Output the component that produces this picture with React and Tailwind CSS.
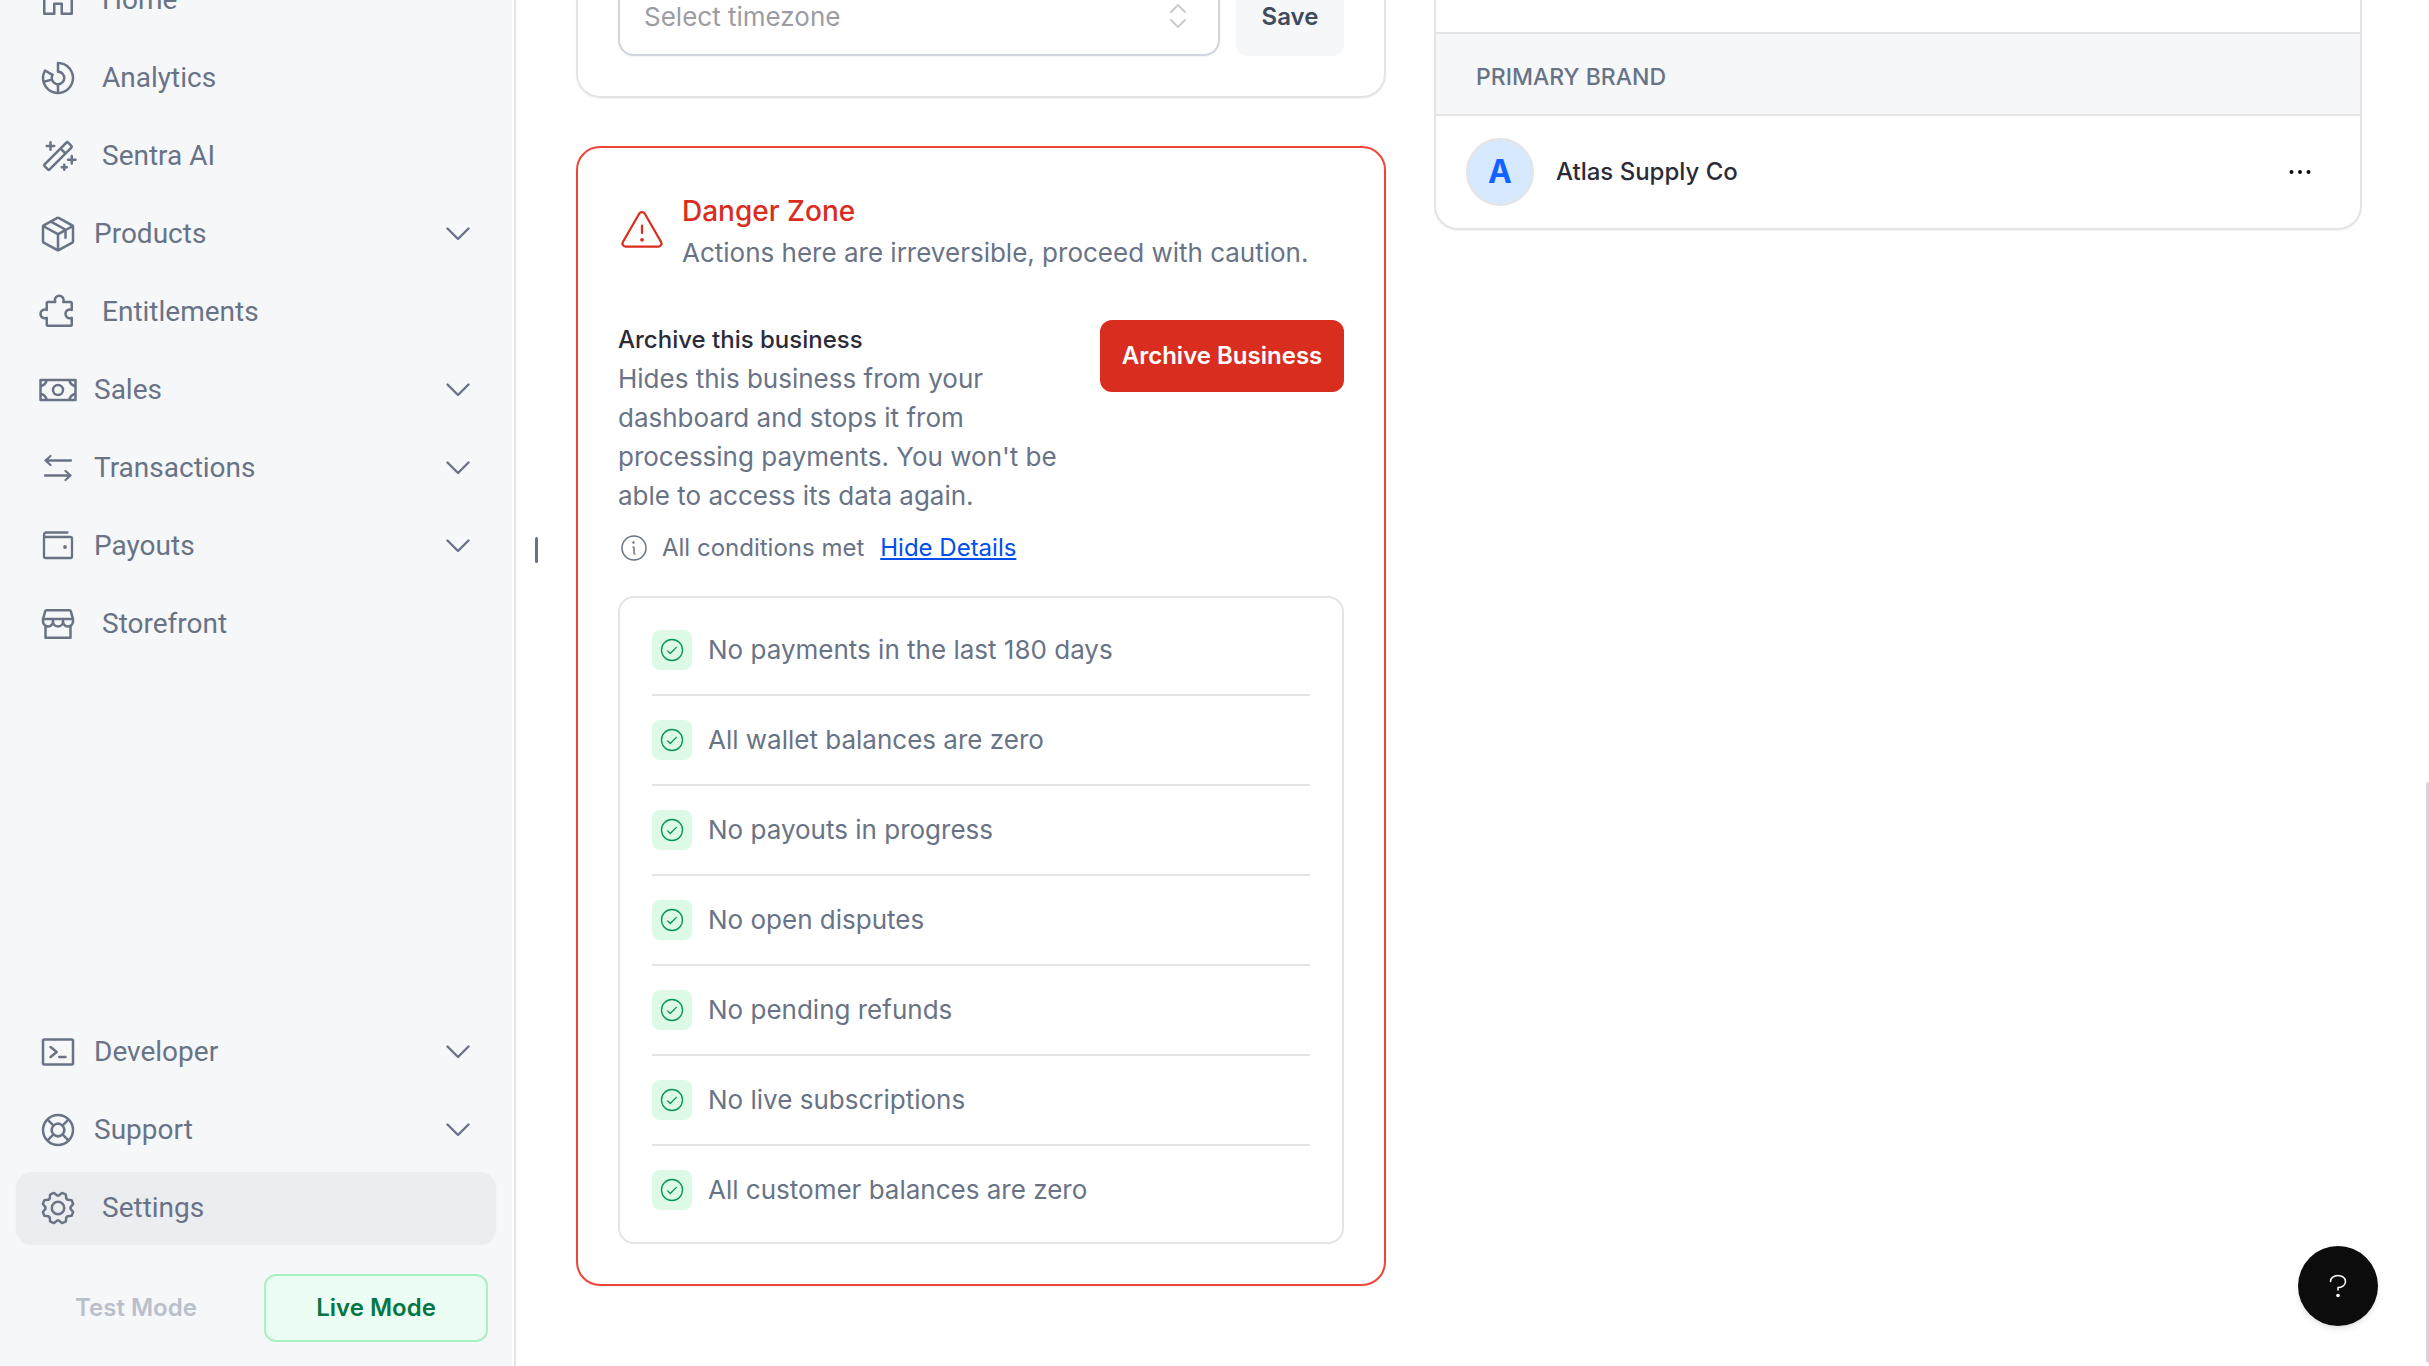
import { useState } from "react";
import {
  PiHouse,
  PiChartDonut,
  PiMagicWand,
  PiPackage,
  PiPuzzlePiece,
  PiMoney,
  PiStorefront,
  PiTerminalWindow,
  PiLifebuoy,
  PiGear,
  PiWarningLight,
  PiInfoLight,
  PiCheckCircleLight,
  PiDotsThreeBold,
} from "react-icons/pi";

const TransferIcon = ({ className }) => (
  <svg
    viewBox="0 0 40 40"
    fill="none"
    stroke="currentColor"
    strokeWidth="2.3"
    strokeLinecap="round"
    strokeLinejoin="round"
    className={className}
  >
    <path d="M33 12.500H7.500M12.500 8l-5 4.500 5 4.500" />
    <path d="M7 27.500h25.500M27.500 23l5 4.500-5 4.500" />
  </svg>
);

const WalletIcon = ({ className }) => (
  <svg
    viewBox="0 0 40 40"
    fill="none"
    stroke="currentColor"
    strokeWidth="2.3"
    strokeLinecap="round"
    strokeLinejoin="round"
    className={className}
  >
    <path d="M29.500 6.500H8.500a2.500 2.500 0 0 0-2.500 2.500v21.500a1.500 1.500 0 0 0 1.500 1.500h25a1.500 1.500 0 0 0 1.500-1.500v-18a1.500 1.500 0 0 0-1.500-1.500H8.500a2.500 2.500 0 0 1-2.500-2.200" />
    <circle cx="27" cy="21" r="1.900" fill="currentColor" stroke="none" />
  </svg>
);

const ChevronIcon = ({ className }) => (
  <svg
    viewBox="0 0 24 14"
    fill="none"
    stroke="currentColor"
    strokeWidth="2.4"
    strokeLinecap="round"
    strokeLinejoin="round"
    className={className}
  >
    <path d="M1.500 1.500L12 12 22.500 1.500" />
  </svg>
);

const SortIcon = ({ className }) => (
  <svg
    viewBox="0 0 16 24"
    fill="none"
    stroke="currentColor"
    strokeWidth="2"
    strokeLinecap="round"
    strokeLinejoin="round"
    className={className}
  >
    <path d="M1 8l7-7 7 7M1 16l7 7 7-7" />
  </svg>
);

const QuestionIcon = ({ className }) => (
  <svg viewBox="0 0 18 24" fill="none" className={className}>
    <path
      d="M1.500 7.500C1.500 4 4.800 1.500 9 1.500S16.500 4 16.500 7.500 13 13.500 9 13.500V16"
      stroke="currentColor"
      strokeWidth="1.500"
      strokeLinecap="round"
      strokeLinejoin="round"
    />
    <circle cx="9" cy="21.500" r="1.800" fill="currentColor" />
  </svg>
);

const mainLinks = [
  { name: "Home", icon: PiHouse },
  { name: "Analytics", icon: PiChartDonut },
  { name: "Sentra AI", icon: PiMagicWand },
  { name: "Products", icon: PiPackage, group: true },
  { name: "Entitlements", icon: PiPuzzlePiece },
  { name: "Sales", icon: PiMoney, group: true },
  { name: "Transactions", icon: TransferIcon, group: true },
  { name: "Payouts", icon: WalletIcon, group: true },
  { name: "Storefront", icon: PiStorefront },
];

const footerLinks = [
  { name: "Developer", icon: PiTerminalWindow, group: true },
  { name: "Support", icon: PiLifebuoy, group: true },
  { name: "Settings", icon: PiGear, active: true },
];

const conditions = [
  "No payments in the last 180 days",
  "All wallet balances are zero",
  "No payouts in progress",
  "No open disputes",
  "No pending refunds",
  "No live subscriptions",
  "All customer balances are zero",
];

const NavItem = ({ item }) => {
  const Icon = item.icon;

  if (item.group) {
    return (
      <button className="flex h-[72px] w-full items-center gap-4 rounded-2xl pr-[26px] pl-[22px] text-left">
        <Icon className="size-10 shrink-0" />
        <span className="flex-1">{item.name}</span>
        <ChevronIcon className="h-3.5 w-6 shrink-0" />
      </button>
    );
  }

  return (
    <a
      href="#"
      className={`flex h-[72px] items-center gap-6 rounded-2xl px-[22px] ${
        item.active ? "bg-[#ecedf1] shadow-xs" : ""
      }`}
    >
      <Icon className="size-10 shrink-0" />
      {item.name}
    </a>
  );
};

const Sidebar = () => {
  const [live, setLive] = useState(true);

  const modeStyle = (on) => {
    if (on) return "border-[#abefc6] bg-[#ecfdf3] text-[#067647]";
    return "border-transparent text-[#b9c0cc]";
  };

  return (
    <aside className="flex w-[516px] shrink-0 flex-col border-r-2 border-[#e4e4e6] bg-[#f6f7f9] pb-6 shadow-[inset_-2px_0_0_#fff]">
      <nav className="-mt-9 flex flex-1 flex-col gap-1.5 pr-[18px] pl-4 font-[Roboto,sans-serif] text-[28px] text-[#697386]">
        {mainLinks.map((item) => (
          <NavItem key={item.name} item={item} />
        ))}
        <div className="mt-auto flex flex-col gap-1.5">
          {footerLinks.map((item) => (
            <NavItem key={item.name} item={item} />
          ))}
        </div>
      </nav>

      {/* MODE SWITCH */}
      <div className="mt-[30px] flex gap-4 pr-[26px] pl-6 text-2xl font-semibold">
        <button
          onClick={() => setLive(false)}
          className={`h-[68px] flex-1 rounded-xl border-2 ${modeStyle(!live)}`}
        >
          Test Mode
        </button>
        <button
          onClick={() => setLive(true)}
          className={`h-[68px] flex-1 rounded-xl border-2 ${modeStyle(live)}`}
        >
          Live Mode
        </button>
      </div>
    </aside>
  );
};

const TimezoneCard = () => (
  <section className="flex gap-4 rounded-3xl border-2 border-[#e4e4e6] p-10 shadow-xs">
    <div className="relative flex-1">
      <select
        aria-label="Timezone"
        defaultValue=""
        className="h-20 w-full appearance-none rounded-2xl border-2 border-[#d0d5dd] bg-white px-6 text-[26px] text-[#9c9ca3] shadow-xs"
      >
        <option value="">Select timezone</option>
        <option value="utc">UTC</option>
      </select>
      <SortIcon className="pointer-events-none absolute top-7 right-[34px] h-6 w-4 text-[#cccccf]" />
    </div>
    <button className="h-20 w-[108px] rounded-xl bg-[#f6f7f9] pt-0.5 text-2xl font-semibold text-[#414b5e]">
      Save
    </button>
  </section>
);

const DangerZone = () => {
  const [open, setOpen] = useState(true);

  return (
    <section className="rounded-3xl border-2 border-[#f04438] p-10 shadow-xs">
      <div className="flex items-center gap-4">
        <PiWarningLight className="size-12 shrink-0 text-[#d92d20]" />
        <div>
          <h2 className="text-[28px] leading-[46px] font-medium text-[#d92d20]">Danger Zone</h2>
          <p className="text-[26px] leading-[38px] text-[#697386]">
            Actions here are irreversible, proceed with caution.
          </p>
        </div>
      </div>

      <div className="mt-12 flex items-start gap-8">
        <div className="flex-1">
          <h3 className="text-2xl leading-[39px] font-medium text-[#2b2b38]">
            Archive this business
          </h3>
          <p className="text-[26px] leading-[39px] text-[#697386]">
            Hides this business from your dashboard and stops it from processing payments. You
            won't be able to access its data again.
          </p>
        </div>
        <button className="h-[72px] w-[244px] shrink-0 rounded-xl bg-[#d92d20] text-2xl font-semibold text-white">
          Archive Business
        </button>
      </div>

      <div className="mt-[13px] flex items-center gap-3 text-2xl leading-10 text-[#697386]">
        <PiInfoLight className="size-8 shrink-0" />
        All conditions met
        <button
          onClick={() => setOpen(!open)}
          className="ml-1 text-[#004eeb] underline decoration-2 underline-offset-2"
        >
          {open ? "Hide Details" : "Show Details"}
        </button>
      </div>

      {open && (
        <ul className="mt-7 divide-y-2 divide-[#e4e4e6] rounded-2xl border-2 border-[#e4e4e6] px-8 py-2">
          {conditions.map((text) => (
            <li
              key={text}
              className="flex items-center gap-4 py-6 text-[26px] leading-[38px] text-[#697386]"
            >
              <span className="flex size-10 items-center justify-center rounded-lg bg-[#dcfae6] text-[#079455]">
                <PiCheckCircleLight className="size-7" />
              </span>
              {text}
            </li>
          ))}
        </ul>
      )}
    </section>
  );
};

const BrandsCard = () => (
  <section className="overflow-hidden rounded-3xl border-2 border-[#e4e4e6] shadow-xs">
    <div className="h-24" />
    <h2 className="flex h-[84px] items-center border-y-2 border-[#e4e4e6] bg-[#f6f7f9] px-10 pt-1.5 text-[23px] font-medium text-[#697386]">
      PRIMARY BRAND
    </h2>
    <div className="flex h-28 items-center gap-[22px] px-[30px]">
      <span className="flex size-[68px] items-center justify-center rounded-full border-2 border-[#e4e4e6] bg-[#d6e9ff] text-[32px] font-bold text-[#1162ff]">
        A
      </span>
      <span className="flex-1 text-2xl font-medium text-[#2b2b38]">Atlas Supply Co</span>
      <button aria-label="More actions" className="px-3.5 text-[#101014]">
        <PiDotsThreeBold className="size-8" />
      </button>
    </div>
  </section>
);

const App = () => {
  return (
    <div className="flex h-screen overflow-hidden bg-white font-[Inter,sans-serif]">
      <Sidebar />

      <button
        aria-label="Resize sidebar"
        className="flex w-10 shrink-0 justify-center self-start pt-[537px]"
      >
        <span className="h-[26px] w-[3px] rounded-full bg-[#697386]" />
      </button>

      <main className="-mt-[66px] grid flex-1 grid-cols-[810fr_928fr] items-start gap-12 pr-[67px] pl-5">
        <div className="flex flex-col gap-12">
          <TimezoneCard />
          <DangerZone />
        </div>
        <BrandsCard />
      </main>

      <button
        aria-label="Help"
        className="fixed right-[51px] bottom-10 flex size-20 items-center justify-center rounded-full bg-[#0c0c0c] text-white shadow-md"
      >
        <QuestionIcon className="h-6 w-[18px]" />
      </button>

      {/* SCROLLBAR THUMB */}
      <div className="fixed right-0 bottom-[3px] h-[581px] w-[3px] rounded-l-full bg-[#d0d5dd]" />
    </div>
  );
};

export default App;
